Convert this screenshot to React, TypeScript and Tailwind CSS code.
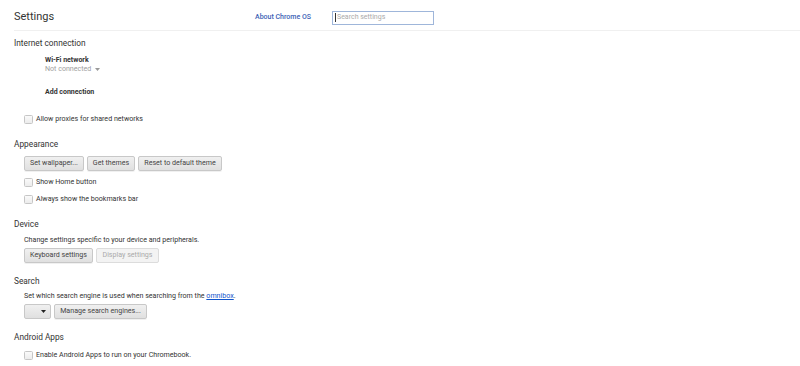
function Checkbox({ label, className = "" }: { label: string; className?: string }) {
  return (
    <div className={`flex items-center pl-[10px] ${className}`}>
      <span className="mr-[3px] h-[9px] w-[9px] rounded-[1.5px] border border-[#c6c6c6] bg-gradient-to-b from-[#fafafa] to-[#ececec]" />
      <span className="text-[7.1px] text-[#333]">{label}</span>
    </div>
  );
}

function Button({ children, disabled = false, w }: { children: React.ReactNode; disabled?: boolean; w: string }) {
  return (
    <button
      className={`flex h-[15px] items-center justify-center rounded-[2px] border text-[7.1px] ${w} ${
        disabled
          ? "border-[#dcdcdc] bg-[#f3f3f3] text-[#aaa]"
          : "border-[#c8c8c8] bg-gradient-to-b from-[#f0f0f0] to-[#e0e0e0] text-[#444] shadow-[0_1px_0_rgba(0,0,0,0.06)]"
      }`}
    >
      {children}
    </button>
  );
}

function SectionTitle({ children, className = "" }: { children: React.ReactNode; className?: string }) {
  return <div className={`flex h-[20px] items-center text-[8.3px] text-[#333] ${className}`}>{children}</div>;
}

export default function App() {
  return (
    <div className="h-[366px] w-[800px] overflow-hidden bg-white font-['Roboto',sans-serif]">
      <div className="pl-[14px]">
        <header className="flex h-[31px] items-center border-b border-[#f0f0f0] pt-[5px]">
          <h1 className="w-[241px] text-[11px] font-normal text-[#333]">Settings</h1>
          <a className="w-[77px] text-[7px] font-medium text-[#3c5fb5]">About Chrome OS</a>
          <div className="flex h-[14px] w-[102px] items-center border border-[#9fb6da] px-[2px] text-[7px] text-[#aaa]">
            <span className="mr-px h-[9px] w-px bg-[#333]" />
            Search settings
          </div>
        </header>

        <div className="flex h-[24px] items-center pt-[1px] text-[8.3px] text-[#333]">Internet connection</div>
        <div className="pl-[31px]">
          <div className="flex h-[10px] items-center text-[7px] font-bold text-[#333]">Wi-Fi network</div>
          <div className="flex h-[9px] items-center text-[7.1px] text-[#a0a0a0]">
            Not connected
            <svg className="ml-[4px]" width="5" height="3" viewBox="0 0 5 3">
              <path d="M0 0h5L2.5 3z" fill="#999" />
            </svg>
          </div>
          <div className="mt-[13px] flex h-[10px] items-center text-[7px] font-bold text-[#333]">Add connection</div>
        </div>
        <Checkbox label="Allow proxies for shared networks" className="mt-[16px] h-[12px]" />

        <SectionTitle className="mt-[9px]">Appearance</SectionTitle>
        <div className="mt-[2px] flex gap-[3px] pl-[10px]">
          <Button w="w-[60px]">Set wallpaper...</Button>
          <Button w="w-[48px]">Get themes</Button>
          <Button w="w-[84px]">Reset to default theme</Button>
        </div>
        <Checkbox label="Show Home button" className="mt-[5px] h-[12px]" />
        <Checkbox label="Always show the bookmarks bar" className="mt-[5px] h-[12px]" />

        <SectionTitle className="mt-[9px]">Device</SectionTitle>
        <div className="mt-px flex h-[10px] items-center pl-[10px] text-[7.1px] text-[#333]">
          Change settings specific to your device and peripherals.
        </div>
        <div className="mt-[3px] flex gap-[3px] pl-[10px]">
          <Button w="w-[69px]">Keyboard settings</Button>
          <Button w="w-[63px]" disabled>
            Display settings
          </Button>
        </div>

        <SectionTitle className="mt-[8px]">Search</SectionTitle>
        <div className="flex h-[10px] items-center pl-[10px] text-[7.1px] text-[#333]">
          Set which search engine is used when searching from the&nbsp;
          <a className="text-[#15c] underline">omnibox</a>.
        </div>
        <div className="mt-[3px] flex gap-[3px] pl-[10px]">
          <button className="flex h-[15px] w-[27px] items-center justify-end rounded-[2px] border border-[#c8c8c8] bg-gradient-to-b from-[#f0f0f0] to-[#e0e0e0] pr-[4px]">
            <svg width="5" height="3" viewBox="0 0 5 3">
              <path d="M0 0h5L2.5 3z" fill="#222" />
            </svg>
          </button>
          <Button w="w-[93px]">Manage search engines...</Button>
        </div>

        <SectionTitle className="mt-[8px]">Android Apps</SectionTitle>
        <Checkbox label="Enable Android Apps to run on your Chromebook." className="mt-[2px] h-[12px]" />
      </div>
    </div>
  );
}
